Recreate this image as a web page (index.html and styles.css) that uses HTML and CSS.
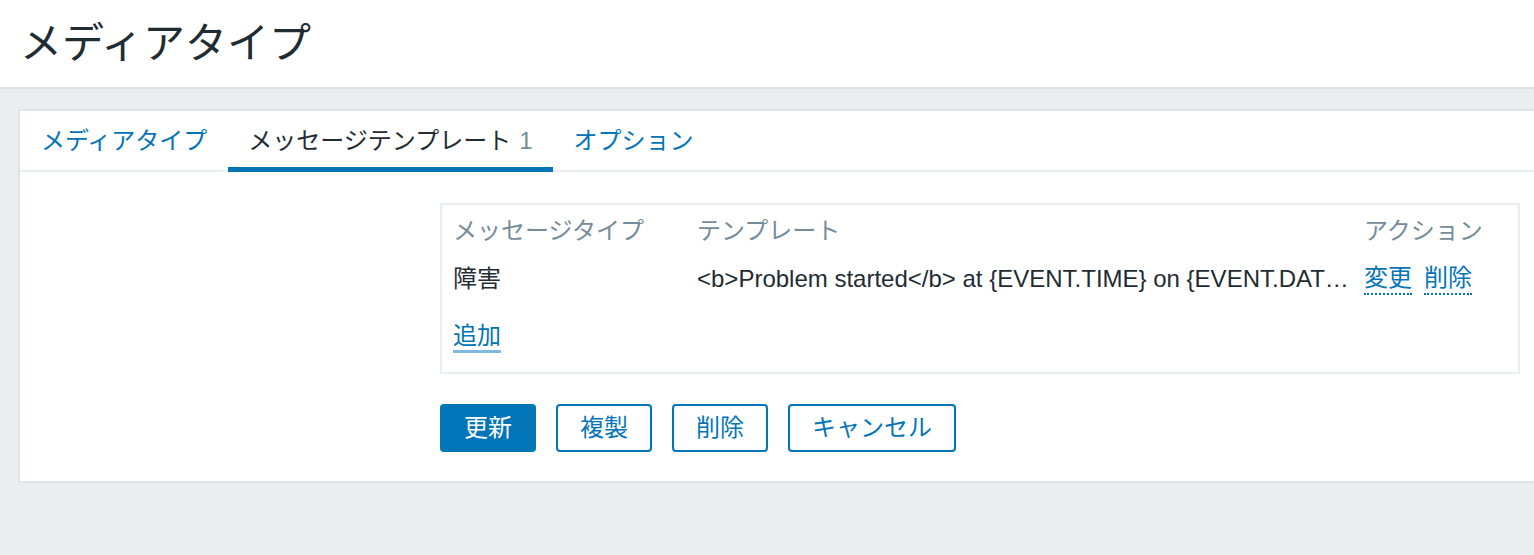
FILE: index.html
```html
<!DOCTYPE html>
<html lang="ja">
<head>
<meta charset="utf-8">
<title>メディアタイプ</title>
<link rel="stylesheet" href="styles.css">
</head>
<body>
<header class="page-header">
  <h1 class="page-title">メディアタイプ</h1>
</header>
<main class="wrapper">
  <section class="card">
    <nav class="tabs">
      <a class="tab" href="#">メディアタイプ</a>
      <a class="tab active" href="#">メッセージテンプレート<span class="count">1</span></a>
      <a class="tab" href="#">オプション</a>
    </nav>
    <div class="tab-content">
      <div class="tpl-box">
        <table class="tpl-table">
          <colgroup>
            <col class="c1">
            <col class="c2">
            <col class="c3">
          </colgroup>
          <thead>
            <tr>
              <th>メッセージタイプ</th>
              <th>テンプレート</th>
              <th>アクション</th>
            </tr>
          </thead>
          <tbody>
            <tr>
              <td>障害</td>
              <td class="ellipsis">&lt;b&gt;Problem started&lt;/b&gt; at {EVENT.TIME} on {EVENT.DATE}&lt;br&gt;&lt;b&gt;Problem name:&lt;/b&gt; {EVENT.NAME}</td>
              <td class="actions"><a class="link-dotted" href="#">変更</a><a class="link-dotted" href="#">削除</a></td>
            </tr>
          </tbody>
        </table>
        <div class="add-row"><a class="link-add" href="#">追加</a></div>
      </div>
      <div class="buttons">
        <button class="btn primary">更新</button>
        <button class="btn">複製</button>
        <button class="btn">削除</button>
        <button class="btn">キャンセル</button>
      </div>
    </div>
  </section>
</main>
</body>
</html>
```
FILE: styles.css
```css
html, body {
  margin: 0;
  padding: 0;
}
body {
  background: #ebeef0;
  font-family: "Liberation Sans", "Noto Sans CJK JP", sans-serif;
  font-size: 24px;
  color: #1f2c33;
  overflow: hidden;
}
a {
  text-decoration: none;
  color: #0275b8;
}
.page-header {
  height: 87px;
  background: #ffffff;
  border-bottom: 2px solid #dee3e6;
  display: flex;
  align-items: center;
  padding-left: 20px;
}
.page-title {
  margin: 0;
  font-size: 42px;
  font-weight: normal;
  line-height: 50px;
  color: #1f2c33;
}
.wrapper {
  padding: 20px 0 0 18px;
}
.card {
  background: #ffffff;
  border: 2px solid #dfe4e7;
  border-right: none;
  margin-right: -20px;
}
.tabs {
  display: flex;
  border-bottom: 2px solid #ebeef0;
  height: 59px;
  padding-left: 1px;
}
.tab {
  display: flex;
  align-items: center;
  padding: 0 20px;
  margin-right: 1px;
  height: 59px;
  color: #0275b8;
  line-height: 28px;
}
.tab.active {
  color: #1f2c33;
  height: 61px;
  margin-bottom: -2px;
  box-sizing: border-box;
  padding-bottom: 2px;
  box-shadow: inset 0 -5px 0 #0275b8;
}
.count {
  color: #768d99;
  margin-left: 8px;
}
.tab-content {
  padding: 31px 0 29px 420px;
}
.tpl-box {
  width: 1065px;
  border: 2px solid #ebeef0;
  padding: 0 0 11px 11px;
}
.tpl-table {
  border-collapse: collapse;
  table-layout: fixed;
  width: 1065px;
}
.c1 { width: 244px; }
.c2 { width: 667px; }
.tpl-table th {
  font-weight: normal;
  color: #768d99;
  text-align: left;
  height: 52px;
  padding: 0;
  line-height: 28px;
  vertical-align: middle;
}
.tpl-table td {
  height: 44px;
  padding: 0;
  line-height: 28px;
  vertical-align: middle;
}
.tpl-table td.ellipsis {
  white-space: nowrap;
  overflow: hidden;
  text-overflow: ellipsis;
  padding-right: 14px;
}
.actions {
  white-space: nowrap;
}
.link-dotted {
  display: inline-block;
  line-height: 28px;
  padding-bottom: 1px;
  border-bottom: 2px dotted #0275b8;
  margin-right: 12px;
  vertical-align: top;
  margin-top: 1px;
}
.add-row {
  padding-top: 12px;
  height: 48px;
  display: flex;
  align-items: center;
}
.link-add {
  display: inline-block;
  line-height: 28px;
  border-bottom: 3px solid #80b9dc;
}
.buttons {
  display: flex;
  gap: 20px;
  margin-top: 30px;
}
.btn {
  font-family: "Liberation Sans", "Noto Sans CJK JP", sans-serif;
  font-size: 24px;
  height: 48px;
  padding: 0 22px;
  border: 2px solid #0275b8;
  border-radius: 4px;
  background: #ffffff;
  color: #0275b8;
  line-height: 28px;
  cursor: pointer;
}
.btn.primary {
  background: #0275b8;
  color: #ffffff;
}
```
